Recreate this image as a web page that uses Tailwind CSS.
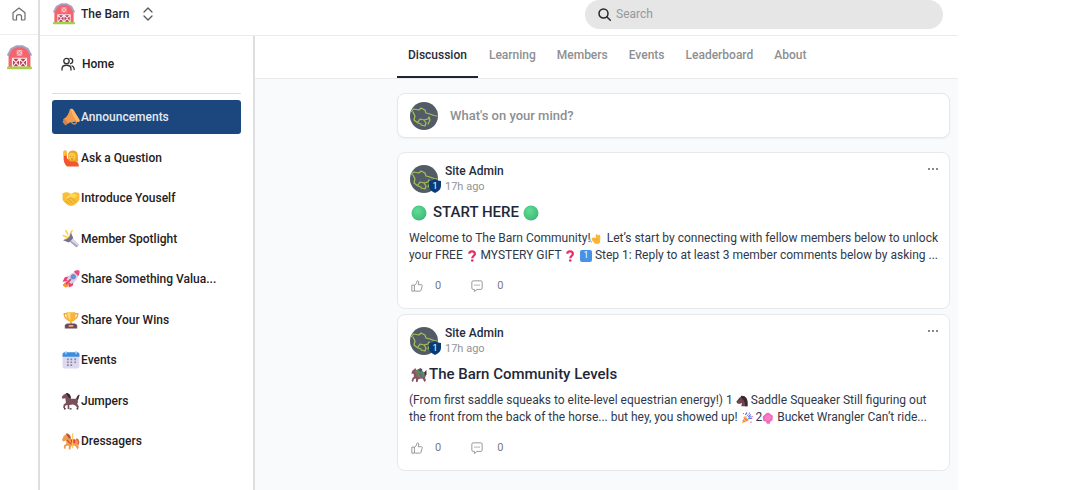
<!DOCTYPE html>
<html lang="en">
<head>
    <meta charset="UTF-8">
    <meta name="viewport" content="width=device-width, initial-scale=1.0">
    <title>The Barn - Community</title>
    <script src="https://cdn.jsdelivr.net/npm/@tailwindcss/browser@4"></script>
</head>
<body class="bg-white font-['Roboto',sans-serif] text-xs text-[#1f2430]">
    <!-- Shared artwork -->
    <svg class="absolute h-0 w-0" aria-hidden="true">
        <symbol id="barn" viewBox="0 0 32 32">
            <path d="M2 28V13l4-8 7-3.500h6L26 5l4 8v15z" fill="#f4646b"/>
            <path d="M1 13.500 5.500 5 12.500 1.500h7L26.500 5 31 13.500" fill="none" stroke="#aaa0c4" stroke-width="2.600" stroke-linejoin="round"/>
            <rect x="12.500" y="6.500" width="7" height="7" fill="#f9c6d0"/>
            <path d="m13 7 6 6m0-6-6 6" stroke="#e26a78" stroke-width="1"/>
            <path d="M7 17h18v11H7z" fill="#b23a56"/>
            <path d="M7 17h18v11H7zM16 17v11M7 17l9 11m0-11L7 28m9-11 9 11m0-11-9 11" fill="none" stroke="#ffe3e8" stroke-width="1.500"/>
            <rect x="0" y="27.500" width="32" height="3.500" rx="1.700" fill="#a5cf4b"/>
        </symbol>
        <symbol id="megaphone" viewBox="0 0 32 32">
            <path d="M17 24c1 6 9 6 9-1" fill="none" stroke="#c98a56" stroke-width="2.500"/>
            <path d="M14 2c2-1 5-1 6 1l11 18c1 3-1 4-4 4-6-1-12 0-18 4l-7-9C9 16 12 10 14 2z" fill="#f09a50"/>
            <path d="M16 2c1-1 3-1 4 1l11 18c1 3 0 4-3 4C23 20 17 11 16 2z" fill="#ffb765"/>
            <path d="m4 18 7 9-5 4-5-6z" fill="#d98050"/>
        </symbol>
        <symbol id="raise" viewBox="0 0 32 32">
            <path d="M3 4c3-3 6 0 5 5l1 8 7 4h8c4 2 6 5 6 10H9C4 27 2 20 3 12z" fill="#f4552f"/>
            <path d="M2 8c0-5 5-7 7-3l-1 7H3z" fill="#ffbe2e"/>
            <path d="M11 9c0-8 17-10 17 2l1 11H14c-3-3-4-8-3-13z" fill="#eda52b"/>
            <circle cx="18" cy="13" r="6.500" fill="#ffc93d"/>
            <path d="M15 13v1m5-1v1m-4 3c1 1 3 1 4 0" stroke="#8a5522" stroke-width="1.400" fill="none"/>
        </symbol>
        <symbol id="handshake" viewBox="0 0 32 32">
            <path d="M1 8c5-3 10-3 15 1 5-4 10-4 15-1v11c-5 7-10 11-15 11S6 26 1 19z" fill="#f8be35"/>
            <path d="m7 16 8-7c5-1 9 0 12 3l-5 4-7-1-4 3z" fill="#ffd85a"/>
            <path d="m10 18 6-3 8 8M7 21l6 6m-2-9 8 8" fill="none" stroke="#d7942b" stroke-width="1.300"/>
        </symbol>
        <symbol id="torch" viewBox="0 0 32 32">
            <path d="m2 10 6 2M7 1l3 6m8-6-3 5" stroke="#f7c948" stroke-width="2.500" stroke-linecap="round"/>
            <path d="m15 11 15 15-4 5L9 17z" fill="#aaa5bd"/>
            <path d="m19 15 11 11-2 2-12-9z" fill="#dcd8ea"/>
            <path d="m16 5 4 9-8 8-10-4c6-3 11-7 14-13z" fill="#75708c"/>
            <path d="M15 6C12 8 6 13 4 17c4 0 11-5 11-11z" fill="#ffe37a"/>
        </symbol>
        <symbol id="rocket" viewBox="0 0 32 32">
            <path d="m4 23 6-3 4 4-4 6-4 1-5-4z" fill="#f6933b"/>
            <path d="m13 11-8 2-4 8 9-1zM21 19l-2 9-7 3 0-9z" fill="#ea3f7b"/>
            <path d="M29 3c1 9-3 17-13 22l-8-8C13 7 20 3 29 3z" fill="#d6d2e8"/>
            <path d="M31 1c1 5-1 8-2 10l-8-8c3-2 6-3 10-2z" fill="#ec4a7d"/>
            <circle cx="20" cy="12" r="4" fill="#4a9cf0" stroke="#827c9f" stroke-width="1.500"/>
            <path d="m8 24 7-7" stroke="#e2336e" stroke-width="3" stroke-linecap="round"/>
        </symbol>
        <symbol id="trophy" viewBox="0 0 32 32">
            <path d="M9 5H4c0 6 2 9 7 10M23 5h5c0 6-2 9-7 10" fill="none" stroke="#f4a640" stroke-width="2.500"/>
            <path d="M8 2h16v8c0 6-2 8-6 9v4h-4v-4c-4-1-6-3-6-9z" fill="#fbb43b"/>
            <path d="M10 3h5v13c-4-2-5-6-5-13z" fill="#ffd977"/>
            <path d="M9 22h14l4 3v6H5v-6z" fill="#71495c"/>
            <rect x="12" y="25" width="8" height="3" fill="#eeb36a"/>
        </symbol>
        <symbol id="calendar" viewBox="0 0 32 32">
            <rect x="1" y="3" width="30" height="28" rx="4" fill="#dcd9ee"/>
            <path d="M1 10V6c0-2 1-4 4-4h22c3 0 4 2 4 4v4z" fill="#3a8ee0"/>
            <path d="M7 1v4M25 1v4" stroke="#a9d1f7" stroke-width="2.500" stroke-linecap="round"/>
            <path d="M9 15h3m3 0h3m4 0h3M9 20h3m3 0h3m4 0h3M9 25h3m3 0h3" stroke="#8781a6" stroke-width="3"/>
        </symbol>
        <symbol id="horse" viewBox="0 0 32 32">
            <path d="M25 12c2-5 3-7 7-7-3 3-1 8-5 10z" fill="#3d2c38"/>
            <path d="m3 5 5-3 5 4 3 6h9c4 1 4 6 2 9l3 5-2 4-3-5-5-3-7 1v7h-3v-7l-4 1-1 5-3-1 1-6 4-3-1-8-5 1-2-3z" fill="#79505a"/>
            <path d="M7 2c5-1 9 4 9 9l-4-1-3-5z" fill="#35242f"/>
            <path d="m4 28 3 1-1 2H3zm10 1h3v2h-4zm12-1 3 1v2h-3z" fill="#403040"/>
        </symbol>
        <symbol id="carousel" viewBox="0 0 32 32">
            <path d="M25 12c4-2 5 3 6 6l-2 7-4-7z" fill="#dc6548"/>
            <path d="m3 7 5-4 6 5 2 6h9c4 1 4 6 2 8l3 5-2 4-5-7-7 1-1 6h-3v-7l-5 1-1 5-3-1 1-6 4-2-1-6-5 2-2-3z" fill="#ef9b50"/>
            <path d="M7 3c5-1 9 4 9 9l-4-1-3-5z" fill="#b85036"/>
            <path d="M15 13h9l-1 7h-6z" fill="#ea3c48"/>
            <path d="M19 2v27" stroke="#ffc64a" stroke-width="2"/>
            <path d="m9 14 4 5 3 2" fill="none" stroke="#e8384c" stroke-width="2"/>
        </symbol>
        <symbol id="racing" viewBox="0 0 32 32">
            <path d="m26 11 5-5v9l-4 6z" fill="#44323d"/>
            <path d="m2 8 6-5 6 5 3 5h9c4 1 4 6 2 8l2 6-3 3-4-7-8 1-2 6h-3v-7l-4 1-2 6-3-2 2-6 3-3-1-6-4 1z" fill="#895461"/>
            <path d="m8 8 7-4h5l6 7 1 8-8 3-7-2z" fill="#51915c"/>
            <path d="m14 5 5-3 4 3-4 5z" fill="#5e4770"/>
            <path d="m4 7 8 5 2 8M9 3v6" fill="none" stroke="#d43e63" stroke-width="2"/>
            <path d="m18 12 3 8" stroke="#7656a4" stroke-width="4"/>
        </symbol>
        <symbol id="horsehead" viewBox="0 0 32 32">
            <path d="M14 3c10-1 16 7 16 17v10H14l2-9-7 3-6-2-2-5 8-10z" fill="#70454c"/>
            <path d="M14 2c11-1 17 8 17 18v10h-7c1-10-2-17-10-21z" fill="#3c2831"/>
            <path d="M10 11v2M4 18v1" stroke="#25171d" stroke-width="2"/>
        </symbol>
        <symbol id="party" viewBox="0 0 32 32">
            <path d="m10 10 12 12L2 30z" fill="#f7b546"/>
            <path d="m8 15 9 9m-12-2 5 5" stroke="#e84d89" stroke-width="2.500"/>
            <path d="M12 8c1-4 4-4 3-7m5 13c2-5 5-4 5-8m-3 12c4-2 5 0 8-2" fill="none" stroke="#7657dc" stroke-width="3"/>
            <path d="M5 4h3m13-1h3m4 9h3m-6 15h3" stroke="#e84a9d" stroke-width="3"/>
            <path d="m15 12 5-6m-2 13 9-8" stroke="#429de7" stroke-width="2.500"/>
        </symbol>
        <symbol id="bucket" viewBox="0 0 32 32">
            <path d="M9 5c5-5 11-4 14 1l6 4-1 12-6 4-1 5h-8l-2-5-8-3-1-11z" fill="#f36abd"/>
            <path d="m10 10 8-3 7 7-4 9-10-1-5-6z" fill="#f67cc6"/>
        </symbol>
        <symbol id="wave" viewBox="0 0 32 32">
            <path d="M10 12c-5 0-7 6-3 9l5 6c7 6 17 3 17-7V8c0-5-5-6-6-1-2-6-7-5-7 0l1 6z" fill="#fbb637"/>
            <path d="m12 16 7 5m-1-8 4 6" stroke="#e09729" stroke-width="1.500"/>
            <path d="M2 14c-2 4 0 8 3 10M1 19c0 3 1 6 4 7" fill="none" stroke="#72b7ee" stroke-width="2"/>
        </symbol>
        <symbol id="question" viewBox="0 0 32 32">
            <path d="M9 10c0-9 15-9 15 0 0 6-7 6-7 12" fill="none" stroke="#e52e60" stroke-width="6"/>
            <circle cx="17" cy="28" r="3.500" fill="#e52e60"/>
        </symbol>
        <symbol id="avatar" viewBox="0 0 28 28">
            <circle cx="14" cy="14" r="14" fill="#535b66"/>
            <path d="m1.500 9.500 2-2.500L9 8l2-2 4 2 1 3 4 1 4 1.500 3 .5M3 10l2 4-1 4 4 3 3 1M8 20l2-3 4 1 4-1 1-2M14 18l2 3-1 3-4-1M19 15l1 3-2 4" fill="none" stroke="#a3c455" stroke-width="1.200" stroke-linecap="round" stroke-linejoin="round"/>
        </symbol>
        <symbol id="shield" viewBox="0 0 12 14">
            <path d="M6 0c2 1.500 4 1.500 6 2v5c0 3-2 5-6 7-4-2-6-4-6-7V2c2-.5 4-.5 6-2z" fill="#063c78"/>
        </symbol>
        <symbol id="like" viewBox="0 0 14 14">
            <path d="M1 6h3v7H1zM4 6.500l2-2.200c.8-1 .4-3 1.500-3.300C9 .8 9.500 2.500 8.500 5.500H12c1 0 1.300.8 1 1.700l-1.300 4.600c-.2.800-.7 1.200-1.500 1.200H5.500L4 12.200" fill="none" stroke="#85888d" stroke-linejoin="round"/>
        </symbol>
        <symbol id="comment" viewBox="0 0 14 14">
            <path d="M2.500 1h9c1 0 1.500.6 1.500 1.500v7c0 1-.6 1.500-1.500 1.500H7l-3 2.500V11H2.500C1.500 11 1 10.400 1 9.500v-7C1 1.600 1.600 1 2.500 1z" fill="none" stroke="#85888d" stroke-linejoin="round"/>
            <path d="M4 6h1.200m1.200 0h1.200m1.200 0H10" stroke="#85888d" stroke-width="1.300"/>
        </symbol>
        <radialGradient id="green" cx=".4" cy=".35" r=".7">
            <stop offset="0" stop-color="#5fdd94"/>
            <stop offset="1" stop-color="#3fb878"/>
        </radialGradient>
        <symbol id="dot" viewBox="0 0 16 16">
            <circle cx="8" cy="8" r="7.500" fill="url(#green)"/>
        </symbol>
    </svg>

    <div class="flex min-h-screen">
        <!-- Community rail -->
        <aside class="flex w-10 shrink-0 flex-col border-r-2 border-[#dddee0]">
            <a href="#" aria-label="Dashboard" class="flex h-[35px] items-start justify-center border-b border-[#eeeeee] pt-[7px]">
                <svg class="h-[14px] w-[14px]" viewBox="0 0 14 14" fill="none" stroke="#6a6c70" stroke-width="1.200" stroke-linejoin="round"><path d="M1 5.800 7 1l6 4.800V12c0 .7-.4 1-1 1H9.500V9.500C9.500 7 4.500 7 4.500 9.500V13H2c-.6 0-1-.3-1-1z"/></svg>
            </a>
            <a href="#" aria-label="The Barn" class="mt-[10px] flex justify-center">
                <svg class="h-[25px] w-[25px]"><use href="#barn"/></svg>
            </a>
        </aside>

        <div class="mr-[122px] flex min-w-0 flex-1 flex-col">
            <header class="flex h-[36px] items-start justify-between border-b border-[#eaebec] pr-[15px]">
                <button type="button" class="flex h-7 items-center pl-[13px] font-medium">
                    <svg class="h-[22px] w-[22px]"><use href="#barn"/></svg>
                    <span class="ml-[6px]">The Barn</span>
                    <svg class="ml-[14px] h-[14px] w-[10px]" viewBox="0 0 10 14" fill="none" stroke="#55575b" stroke-width="1.300" stroke-linecap="round" stroke-linejoin="round"><path d="m1 5 4-4 4 4M1 9l4 4 4-4"/></svg>
                </button>
                <label class="flex h-[29px] w-[358px] items-center rounded-full bg-[#e6e6e6] pl-[13px]">
                    <svg class="h-[13px] w-[13px]" viewBox="0 0 13 13" fill="none" stroke="#26282b" stroke-width="1.500" stroke-linecap="round"><circle cx="5.500" cy="5.500" r="4.500"/><path d="m9 9 3.300 3.300"/></svg>
                    <input type="search" aria-label="Search" placeholder="Search" class="ml-[5px] min-w-0 flex-1 bg-transparent pb-[2px] outline-none placeholder:text-[#96989b]">
                </label>
            </header>

            <div class="flex flex-1">
                <nav class="w-[215px] shrink-0 border-r-2 border-[#dddee0] px-3 text-[#1f2124]">
                    <a href="#" class="flex h-[57px] items-center gap-[7px] pb-px pl-[9px] font-medium">
                        <svg class="h-[14px] w-[14px]" viewBox="0 0 14 14" fill="none" stroke="#303236" stroke-width="1.300" stroke-linecap="round"><circle cx="5.500" cy="4" r="2.700"/><path d="M1 13v-1c0-5 9-5 9 0v1M9 1.300c3.500 0 3.500 5 .5 5.300M11 9c1.500.5 2.200 1.600 2.200 3.500"/></svg>
                        Home
                    </a>
                    <ul class="flex h-[365px] flex-col justify-between border-t border-[#dcdddf] pt-[6px] font-medium">
                        <li><a href="#" class="flex h-[34px] items-center rounded-[3px] bg-[#1b477e] pl-[10px] text-[#e3eaf3]"><svg class="mr-px h-[18px] w-[18px]"><use href="#megaphone"/></svg>Announcements</a></li>
                        <li><a href="#" class="flex h-[34px] items-center pl-[10px]"><svg class="mr-px h-[18px] w-[18px]"><use href="#raise"/></svg>Ask a Question</a></li>
                        <li><a href="#" class="flex h-[34px] items-center pl-[10px]"><svg class="mr-px h-[18px] w-[18px]"><use href="#handshake"/></svg>Introduce Youself</a></li>
                        <li><a href="#" class="flex h-[34px] items-center pl-[10px]"><svg class="mr-px h-[18px] w-[18px]"><use href="#torch"/></svg>Member Spotlight</a></li>
                        <li><a href="#" class="flex h-[34px] items-center pl-[10px]"><svg class="mr-px h-[18px] w-[18px]"><use href="#rocket"/></svg>Share Something Valua...</a></li>
                        <li><a href="#" class="flex h-[34px] items-center pl-[10px]"><svg class="mr-px h-[18px] w-[18px]"><use href="#trophy"/></svg>Share Your Wins</a></li>
                        <li><a href="#" class="flex h-[34px] items-center pl-[10px]"><svg class="mr-px h-[18px] w-[18px]"><use href="#calendar"/></svg>Events</a></li>
                        <li><a href="#" class="flex h-[34px] items-center pl-[10px]"><svg class="mr-px h-[18px] w-[18px]"><use href="#horse"/></svg>Jumpers</a></li>
                        <li><a href="#" class="flex h-[34px] items-center pl-[10px]"><svg class="mr-px h-[18px] w-[18px]"><use href="#carousel"/></svg>Dressagers</a></li>
                    </ul>
                </nav>

                <main class="min-w-0 flex-1 bg-[#f8fafb]">
                    <div class="flex h-[43px] gap-px border-b border-[#e8eaec] bg-white pl-[142px] font-medium text-[#8d8f92]">
                        <a href="#" class="flex items-center border-b-2 border-[#1f2438] px-[11px] pb-[2px] text-[#252b3b]">Discussion</a>
                        <a href="#" class="flex items-center px-[10px] pb-1">Learning</a>
                        <a href="#" class="flex items-center px-[10px] pb-1">Members</a>
                        <a href="#" class="flex items-center px-[10px] pb-1">Events</a>
                        <a href="#" class="flex items-center px-[10px] pb-1">Leaderboard</a>
                        <a href="#" class="flex items-center px-[10px] pb-1">About</a>
                    </div>

                    <div class="pt-[14px] pr-2 pl-[142px]">
                        <button type="button" class="flex h-[45px] w-full items-center gap-3 rounded-lg border border-[#e6e9ec] bg-white pl-3 text-[13px] font-medium text-[#8d8f92] shadow-xs">
                            <svg class="h-7 w-7"><use href="#avatar"/></svg>
                            What's on your mind?
                        </button>

                        <article class="mt-[14px] h-[157px] rounded-lg border border-[#e6e9ec] bg-white px-[11px] pt-[10px]">
                            <div class="flex">
                                <div class="relative mt-[2px] ml-px h-7 w-7">
                                    <svg class="h-7 w-7"><use href="#avatar"/></svg>
                                    <span class="absolute -right-[3px] bottom-0 flex h-[14px] w-3 items-center justify-center text-[9px] text-white">
                                        <svg class="absolute inset-0 h-[14px] w-3"><use href="#shield"/></svg>
                                        <span class="relative">1</span>
                                    </span>
                                </div>
                                <div class="ml-[7px] flex-1">
                                    <h3 class="leading-4 font-medium text-[#252c3b]">Site Admin</h3>
                                    <p class="text-[11px] leading-4 text-[#929497]">17h ago</p>
                                </div>
                                <button type="button" aria-label="Post options" class="flex h-3 w-[10px] items-center">
                                    <svg class="h-[2px] w-[10px]" viewBox="0 0 10 2" fill="#85888d"><path d="M0 0h2v2H0zM4 0h2v2H4zM8 0h2v2H8z"/></svg>
                                </button>
                            </div>
                            <h2 class="mt-2 flex h-5 items-center pl-[2px] text-[15px] font-medium text-[#1f2838]">
                                <svg class="mr-[6px] h-4 w-4"><use href="#dot"/></svg>START HERE<svg class="ml-1 h-4 w-4"><use href="#dot"/></svg>
                            </h2>
                            <div class="mt-[7px] leading-[17px] text-[#2f394a]">
                                <p class="flex items-center whitespace-pre">Welcome to The Barn Community!<svg class="mr-[2px] h-3 w-3"><use href="#wave"/></svg> Let’s start by connecting with fellow members below to unlock</p>
                                <p class="flex items-center whitespace-pre">your FREE <svg class="h-3 w-3"><use href="#question"/></svg> MYSTERY GIFT <svg class="h-3 w-3"><use href="#question"/></svg><span class="ml-1 flex h-3 w-3 items-center justify-center rounded-[2px] bg-[#4592e6] text-[9px] text-white">1</span> Step 1: Reply to at least 3 member comments below by asking ...</p>
                            </div>
                            <div class="mt-[14px] flex h-4 items-center pl-[2px] text-[11px] text-[#77797d]">
                                <button type="button" aria-label="Like" class="flex items-center gap-3"><svg class="h-3 w-3"><use href="#like"/></svg>0</button>
                                <button type="button" aria-label="Comment" class="ml-[30px] flex items-center gap-[14px]"><svg class="h-3 w-3"><use href="#comment"/></svg>0</button>
                            </div>
                        </article>

                        <article class="mt-[5px] h-[157px] rounded-lg border border-[#e6e9ec] bg-white px-[11px] pt-[10px]">
                            <div class="flex">
                                <div class="relative mt-[2px] ml-px h-7 w-7">
                                    <svg class="h-7 w-7"><use href="#avatar"/></svg>
                                    <span class="absolute -right-[3px] bottom-0 flex h-[14px] w-3 items-center justify-center text-[9px] text-white">
                                        <svg class="absolute inset-0 h-[14px] w-3"><use href="#shield"/></svg>
                                        <span class="relative">1</span>
                                    </span>
                                </div>
                                <div class="ml-[7px] flex-1">
                                    <h3 class="leading-4 font-medium text-[#252c3b]">Site Admin</h3>
                                    <p class="text-[11px] leading-4 text-[#929497]">17h ago</p>
                                </div>
                                <button type="button" aria-label="Post options" class="flex h-3 w-[10px] items-center">
                                    <svg class="h-[2px] w-[10px]" viewBox="0 0 10 2" fill="#85888d"><path d="M0 0h2v2H0zM4 0h2v2H4zM8 0h2v2H8z"/></svg>
                                </button>
                            </div>
                            <h2 class="mt-2 flex h-5 items-center pl-[2px] text-[15px] font-medium text-[#1f2838]">
                                <svg class="mr-[2px] h-4 w-4"><use href="#racing"/></svg>The Barn Community Levels
                            </h2>
                            <div class="mt-[7px] leading-[17px] text-[#2f394a]">
                                <p class="flex items-center whitespace-pre">(From first saddle squeaks to elite-level equestrian energy!) 1 <svg class="h-3 w-3"><use href="#horsehead"/></svg> Saddle Squeaker Still figuring out</p>
                                <p class="flex items-center whitespace-pre">the front from the back of the horse... but hey, you showed up! <svg class="h-3 w-3"><use href="#party"/></svg> 2<svg class="h-3 w-3"><use href="#bucket"/></svg> Bucket Wrangler Can’t ride...</p>
                            </div>
                            <div class="mt-[14px] flex h-4 items-center pl-[2px] text-[11px] text-[#77797d]">
                                <button type="button" aria-label="Like" class="flex items-center gap-3"><svg class="h-3 w-3"><use href="#like"/></svg>0</button>
                                <button type="button" aria-label="Comment" class="ml-[30px] flex items-center gap-[14px]"><svg class="h-3 w-3"><use href="#comment"/></svg>0</button>
                            </div>
                        </article>
                    </div>
                </main>
            </div>
        </div>
    </div>
</body>
</html>
